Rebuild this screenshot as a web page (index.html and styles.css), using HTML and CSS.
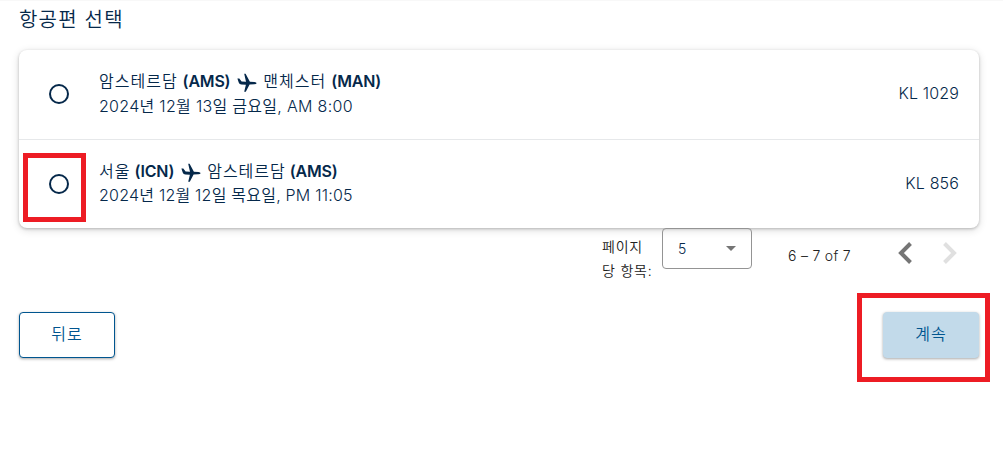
FILE: index.html
```
<!DOCTYPE html>
<html lang="ko">
<head>
  <meta charset="UTF-8">
  <meta name="viewport" content="width=device-width, initial-scale=1.0">
  <title>항공편 선택</title>
  <link rel="stylesheet" href="styles.css">
</head>
<body>
  <div class="container">
    <h1>항공편 선택</h1>

    <div class="flight-list">
      <label class="flight">
        <span class="radio"></span>
        <div class="details">
          <div class="route">
            <span class="city">암스테르담</span> <b>(AMS)</b>
            <svg class="plane" viewBox="0 0 20 20"><path d="M0.4 5.6 2.3 5.4 4.6 8.6 9 8.7 7.2 0.8 8.6 0.8 12.9 8.8 17.5 9Q19.6 9.3 19.6 10.2 19.3 11.1 17.4 11.2L12.6 11.6 8.8 18.7 7.2 18.7 8.9 11.8 4.4 11.6Q2.3 11.4 1.7 9.6Z"/></svg>
            <span class="city">맨체스터</span> <b>(MAN)</b>
          </div>
          <div class="date">2024년 12월 13일 금요일, AM 8:00</div>
        </div>
        <span class="number">KL 1029</span>
      </label>
      <label class="flight">
        <span class="radio marked"></span>
        <div class="details">
          <div class="route short">
            <span class="city">서울</span> <b>(ICN)</b>
            <svg class="plane" viewBox="0 0 20 20"><path d="M0.4 5.6 2.3 5.4 4.6 8.6 9 8.7 7.2 0.8 8.6 0.8 12.9 8.8 17.5 9Q19.6 9.3 19.6 10.2 19.3 11.1 17.4 11.2L12.6 11.6 8.8 18.7 7.2 18.7 8.9 11.8 4.4 11.6Q2.3 11.4 1.7 9.6Z"/></svg>
            <span class="city">암스테르담</span> <b>(AMS)</b>
          </div>
          <div class="date late">2024년 12월 12일 목요일, PM 11:05</div>
        </div>
        <span class="number">KL 856</span>
      </label>
    </div>

    <div class="paginator">
      <div class="page-label">페이지<br>당 항목:</div>
      <div class="page-select">
        <span>5</span>
        <svg width="10" height="5" viewBox="0 0 10 5"><path d="M0 0h10L5 5z"/></svg>
      </div>
      <div class="range">6 – 7 of 7</div>
      <svg class="arrow" viewBox="0 0 14 22"><path d="M12.5 1.5 3 11l9.5 9.5"/></svg>
      <svg class="arrow disabled" viewBox="0 0 14 22"><path d="M1.5 1.5 11 11l-9.5 9.5"/></svg>
    </div>

    <div class="actions">
      <button class="btn">뒤로</button>
      <button class="btn primary">계속</button>
    </div>
  </div>
</body>
</html>
```
FILE: styles.css
```
*, *::after {
  box-sizing: border-box;
}
body {
  min-height: 100vh;
  margin: 0;
  border-top: 1px solid #f8f8f8;
  background: #fff;
  color: #05284a;
  font-family: Inter, "Noto Sans CJK KR", sans-serif;
  font-size: 16px;
}
.container {
  width: 960px;
  height: 456px;
  margin-left: 19px;
}
h1 {
  height: 49px;
  margin: 0;
  padding-top: 5px;
  font-size: 20px;
  font-weight: 350;
  line-height: 28px;
  letter-spacing: 1.2px;
}
.flight-list {
  height: 178px;
  border-radius: 8px;
  background: #fff;
  box-shadow: 0 1px 3px rgba(0, 0, 0, 0.22), 0 2px 8px rgba(0, 0, 0, 0.14);
}
.flight {
  display: flex;
  align-items: center;
  height: 90px;
  padding: 0 20px 2px 30px;
}
.flight + .flight {
  height: 89px;
  padding-bottom: 0;
  border-top: 1px solid #e6e8ea;
  margin-top: -1px;
}
.radio {
  position: relative;
  width: 20px;
  height: 20px;
  border: 2px solid #05284a;
  border-radius: 50%;
}
.marked::after {
  content: "";
  position: absolute;
  left: -28px;
  top: -23px;
  width: 63px;
  height: 69px;
  border: 5px solid #ed1c24;
}
.details {
  flex: 1;
  margin: -2px 0 0 30px;
  font-weight: 350;
  line-height: 24px;
}
.route {
  display: flex;
  height: 25px;
  white-space: pre;
}
.route b {
  margin-left: 5px;
  font-weight: 600;
  letter-spacing: -0.2px;
}
.city {
  letter-spacing: 1px;
}
.plane {
  width: 20px;
  height: 20px;
  margin: 4px 6px 0 7px;
  fill: #05284a;
}
.route.short {
  height: 24px;
}
.route.short b {
  margin-left: 4px;
}
.date {
  letter-spacing: 0.3px;
}
.date.late {
  letter-spacing: 0.22px;
}
.number {
  margin-top: -3px;
  font-weight: 350;
  letter-spacing: 0.15px;
}
.paginator {
  display: flex;
  height: 84px;
  padding-left: 583px;
  font-size: 14px;
  color: #212121;
}
.page-label {
  width: 60px;
  padding-top: 7px;
  line-height: 24px;
  font-weight: 350;
  letter-spacing: 0.8px;
}
.page-select {
  display: flex;
  align-items: center;
  justify-content: space-between;
  width: 90px;
  height: 41px;
  padding: 0 15px;
  border: 1px solid #949494;
  border-radius: 4px;
  color: #05284a;
}
.page-select span {
  margin-top: -1px;
  font-weight: 350;
}
.page-select svg {
  fill: #757575;
}
.range {
  width: 110px;
  margin-left: 36px;
  padding-top: 16px;
  font-weight: 350;
  line-height: 24px;
  letter-spacing: 0.3px;
}
.arrow {
  width: 14px;
  height: 22px;
  margin-top: 14px;
  fill: none;
  stroke: #757575;
  stroke-width: 4;
}
.arrow.disabled {
  margin-left: 31px;
  stroke: #e0e0e0;
}
.actions {
  display: flex;
  justify-content: space-between;
}
.btn {
  width: 96px;
  height: 46px;
  padding: 0 0 5px;
  border: 1px solid #00558f;
  border-radius: 4px;
  background: #fff;
  color: #00558f;
  font-family: inherit;
  font-size: 16px;
  font-weight: 350;
  letter-spacing: 1px;
  box-shadow: 0 1px 3px rgba(0, 0, 0, 0.35);
}
.btn.primary {
  position: relative;
  border-color: #c2daea;
  background: #c2daea;
}
.btn.primary::after {
  content: "";
  position: absolute;
  left: -27px;
  top: -20px;
  width: 133px;
  height: 89px;
  border: 5px solid #ed1c24;
}
```
